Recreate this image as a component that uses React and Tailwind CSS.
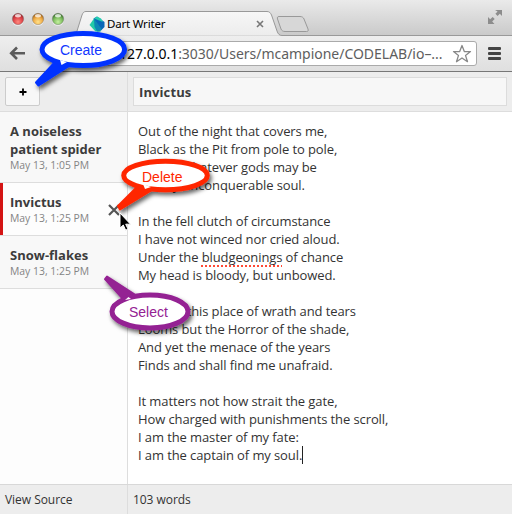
import React from "react";

const notes = [
  { title: "A noiseless patient spider", date: "May 13, 1:05 PM", height: "h-[71px]" },
  { title: "Invictus", date: "May 13, 1:25 PM", height: "h-[53px]", active: true },
  { title: "Snow-flakes", date: "May 13, 1:25 PM", height: "h-[53px]" },
];

function TitleBar() {
  return (
    <div className="relative flex h-[36px] shrink-0 items-start bg-gradient-to-b from-[#eaeaea] to-[#c9c9c9]">
      <svg className="absolute left-0 top-0" width="512" height="36" viewBox="0 0 512 36">
        <defs>
          <linearGradient id="tab" x1="0" y1="0" x2="0" y2="1">
            <stop offset="0" stopColor="#f7f7f7" />
            <stop offset="1" stopColor="#ececec" />
          </linearGradient>
          <radialGradient id="red" cx=".5" cy=".75" r=".65">
            <stop offset="0" stopColor="#ff8a80" />
            <stop offset=".6" stopColor="#e0464a" />
            <stop offset="1" stopColor="#a92c32" />
          </radialGradient>
          <radialGradient id="amber" cx=".5" cy=".75" r=".65">
            <stop offset="0" stopColor="#ffe28c" />
            <stop offset=".6" stopColor="#f0ad48" />
            <stop offset="1" stopColor="#b06f20" />
          </radialGradient>
          <radialGradient id="green" cx=".5" cy=".75" r=".65">
            <stop offset="0" stopColor="#c5f0a0" />
            <stop offset=".6" stopColor="#80bf60" />
            <stop offset="1" stopColor="#467f35" />
          </radialGradient>
        </defs>
        {[["red", 18], ["amber", 38], ["green", 58]].map(([name, x]) => (
          <g key={name}>
            <circle cx={x} cy="20" r="6" fill="#fff" opacity=".6" />
            <circle cx={x} cy="19" r="5.700" fill={`url(#${name})`} stroke="#555" strokeOpacity=".45" strokeWidth=".7" />
            <ellipse cx={x} cy="15.700" rx="3" ry="1.700" fill="#fff" opacity=".75" />
          </g>
        ))}
        <path d="M0 35.500H72C75 35.500 76 33 77 31L82 15C83 12.500 84 11.500 86 11.500H267C269.500 11.500 270.500 13 271.500 15L277 31C278 34 279.500 35.500 282 35.500H512" fill="url(#tab)" stroke="#999" />
        <path d="M279 16.500H300C302 16.500 303.500 17.500 304 19L308 29C308.600 31 308 31.500 306.500 31.500H285C283 31.500 281.500 30.500 281 29L277.500 19C277 17.500 277.500 16.500 279 16.500Z" fill="#d7d7d7" stroke="#999" />
        <path d="M257 21L263 27M263 21L257 27" stroke="#777" strokeWidth="1.600" />
        <path d="M89.500 25L94 18.500L101 31.500H95.500Z" fill="#22c9a8" />
        <path d="M93.500 18.500L97 16.500L104.500 22V27L101 30.500Z" fill="#0867b8" />
        <path d="M94 18.500L97 16.500L101 18.500L103 22Z" fill="#25cdb0" />
        <path d="M94 18.500L102 29.500L99.500 31.500H97L94.500 27Z" fill="#0d87b4" />
        <path d="M495 10h7v6l-2.200-2.200-2.200 2.200-2.200-2.200 2.200-2.200zM488 24v-7l2.200 2.200 2.500-2.200 2 2-2.500 2.500 2.300 2.500z" fill="#8d8d8d" />
      </svg>
      <span className="relative ml-[107px] mt-[16px] whitespace-nowrap font-['Noto_Sans',sans-serif] text-[11.5px] leading-[16px] tracking-[-0.2px] text-black">Dart Writer</span>
    </div>
  );
}

function AddressBar() {
  return (
    <div className="flex h-[36px] shrink-0 items-start border-b border-[#777] bg-gradient-to-b from-[#eeeeee] to-[#dfdfdf] pl-[9px] pt-[5px]">
      <svg className="mt-[5px] shrink-0" width="17" height="15" viewBox="0 0 17 15">
        <path d="M8 1.500L2.200 7.300L8 13M2.500 7.300H16" fill="none" stroke="#5b5b5b" strokeWidth="2.600" />
      </svg>
      <div className="ml-[64px] flex h-[25px] w-[387px] items-center rounded-[3px] border border-[#aaa] bg-white pl-[28px]">
        <span className="w-[333px] shrink-0 whitespace-nowrap font-['Noto_Sans',sans-serif] text-[14px] leading-[22px] tracking-[-0.02px] text-[#5e5e5e]">
          <span className="text-black">127.0.0.1</span>:3030/Users/mcampione/CODELAB/io–...
        </span>
        <svg className="shrink-0" width="20" height="20" viewBox="0 0 20 20">
          <path d="M10 1.500L12.300 7.600H18.500L13.500 11.400L15.500 17.700L10 14L4.500 17.700L6.500 11.400L1.500 7.600H7.700Z" fill="#fff" stroke="#888" strokeWidth="1.300" strokeLinejoin="round" />
        </svg>
      </div>
      <div className="ml-[11px] mt-[6px] flex w-[13px] flex-col gap-[2px]">
        <div className="h-[3px] rounded-[1px] bg-[#444]" />
        <div className="h-[3px] rounded-[1px] bg-[#444]" />
        <div className="h-[3px] rounded-[1px] bg-[#444]" />
      </div>
    </div>
  );
}

function NoteItem({ note }) {
  return (
    <div className={`flex items-stretch border-b border-[#ddd] ${note.height} ${note.active ? "bg-[#fdfdfd]" : "bg-[#f8f8f8]"}`}>
      <div className={`w-[3px] shrink-0 ${note.active ? "bg-[#d41414]" : ""}`} />
      <div className="w-[101px] shrink-0 pl-[7px] pt-[10px]">
        <div className="text-[13px] font-bold leading-[18px] text-[#3c3c3c]">{note.title}</div>
        <div className="whitespace-nowrap text-[10.4px] leading-[15px] text-[#848484]">{note.date}</div>
      </div>
      {note.active && (
        <svg className="ml-[4px] mt-[21px] shrink-0" width="12" height="12" viewBox="0 0 12 12">
          <path d="M1 1L11 11M11 1L1 11" stroke="#555" strokeWidth="2.200" />
        </svg>
      )}
    </div>
  );
}

const lineClass = "h-[18px] whitespace-pre";

function Poem() {
  return (
    <div className="flex-1 bg-white pl-[10px] pt-[10px] text-[13px] leading-[18px] tracking-[-0.1px] text-[#333]">
      <div className={lineClass}>Out of the night that covers me,</div>
      <div className={lineClass}>Black as the Pit from pole to pole,</div>
      <div className={lineClass}>I thank whatever gods may be</div>
      <div className={lineClass}>For my unconquerable soul.</div>
      <div className={lineClass} />
      <div className={lineClass}>In the fell clutch of circumstance</div>
      <div className={lineClass}>I have not winced nor cried aloud.</div>
      <div className={lineClass}>
        Under the <span className="underline decoration-[#ff4a35] decoration-dotted decoration-2 underline-offset-[3px] [text-decoration-skip-ink:none]">bludgeonings</span> of chance
      </div>
      <div className={lineClass}>My head is bloody, but unbowed.</div>
      <div className={lineClass} />
      <div className={lineClass}>Beyond this place of wrath and tears</div>
      <div className={lineClass}>Looms but the Horror of the shade,</div>
      <div className={lineClass}>And yet the menace of the years</div>
      <div className={lineClass}>Finds and shall find me unafraid.</div>
      <div className={lineClass} />
      <div className={lineClass}>It matters not how strait the gate,</div>
      <div className={lineClass}>How charged with punishments the scroll,</div>
      <div className={lineClass}>I am the master of my fate:</div>
      <div className="flex h-[18px] whitespace-pre">
        I am the captain of my soul.<span className="h-[18px] w-px bg-[#222]" />
      </div>
    </div>
  );
}

function Callout({ color, cx, cy, rx, ry, tail, notch }) {
  return (
    <g filter="url(#shadow)">
      <path d={tail} fill={color} stroke={color} strokeWidth="2" strokeLinejoin="round" />
      <ellipse cx={cx} cy={cy} rx={rx} ry={ry} fill="#fff" stroke={color} strokeWidth="5" />
      <path d={notch} fill="#fff" />
    </g>
  );
}

function Callouts() {
  return (
    <div className="pointer-events-none absolute inset-0 font-['Liberation_Sans',sans-serif] text-[14px] leading-[16px]">
      <svg className="absolute left-0 top-0" width="512" height="514" viewBox="0 0 512 514">
        <defs>
          <filter id="shadow" x="-20%" y="-20%" width="150%" height="160%">
            <feDropShadow dx="2" dy="3" stdDeviation="2" floodColor="#000" floodOpacity=".6" />
          </filter>
        </defs>
        <Callout color="#0433ff" cx={83.300} cy={49.500} rx={41.300} ry={16} tail="M56 61L36 82.500L38.500 85.500L69 66Z" notch="M60 60L61.500 65L67 62Z" />
        <Callout color="#ff2600" cx={165.500} cy={175.500} rx={41.800} ry={14.200} tail="M137 187L118 206L120 209.500L152 190Z" notch="M143 184L145 189L151 187Z" />
        <Callout color="#942193" cx={150} cy={311.500} rx={38} ry={16.500} tail="M124 300L105 279L107 276.500L134 294Z" notch="M125 300L128.500 297L131 299Z" />
        <path d="M120 213V228L123.300 225L125.700 230.200L128 229L125.700 224.200H130.500Z" fill="#000" stroke="#fff" strokeWidth="1" />
      </svg>
      <span className="absolute left-[60px] top-[42px] text-[#1237ff]">Create</span>
      <span className="absolute left-[142px] top-[169px] text-[#ff2600]">Delete</span>
      <span className="absolute left-[129px] top-[304px] text-[#942193]">Select</span>
    </div>
  );
}

export default function App() {
  return (
    <div className="relative flex h-[514px] w-[512px] flex-col overflow-hidden bg-white font-['Open_Sans',sans-serif]">
      <TitleBar />
      <AddressBar />
      <div className="flex h-[40px] shrink-0 border-b border-[#ddd] bg-[#ededed]">
        <div className="w-[128px] border-r border-[#ddd] pl-[5px] pt-[5px]">
          <div className="flex h-[29px] w-[35px] items-center justify-center rounded-[2px] border border-[#ccc] bg-[#f7f7f7]">
            <svg width="8" height="8" viewBox="0 0 8 8">
              <path d="M4 0.500V7.500M0.500 4H7.500" stroke="#000" strokeWidth="1.800" />
            </svg>
          </div>
        </div>
        <div className="flex-1 pl-[5px] pr-[5px] pt-[5px]">
          <div className="h-[29px] border border-[#dcdcdc] bg-[#f7f7f7] pl-[5px] text-[13px] font-bold leading-[29px] tracking-[0.1px] text-[#3c3c3c]">Invictus</div>
        </div>
      </div>
      <div className="flex min-h-0 flex-1">
        <div className="w-[128px] shrink-0 border-r border-[#ddd] bg-[#fdfdfd]">
          {notes.map((note) => (
            <NoteItem key={note.title} note={note} />
          ))}
        </div>
        <Poem />
      </div>
      <div className="flex h-[30px] shrink-0 border-t border-[#d8d8d8] bg-[#ededed] text-[12px] leading-[29px] text-[#333]">
        <div className="w-[128px] border-r border-[#ddd] pl-[5px] tracking-[-0.04px]">View Source</div>
        <div className="pl-[5px] tracking-[-0.05px]">103 words</div>
      </div>
      <Callouts />
    </div>
  );
}
